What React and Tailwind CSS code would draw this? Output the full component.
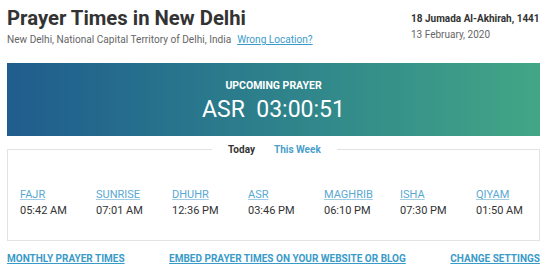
import React from 'react';

const prayers = [
  { name: 'FAJR', time: '05:42 AM' },
  { name: 'SUNRISE', time: '07:01 AM' },
  { name: 'DHUHR', time: '12:36 PM' },
  { name: 'ASR', time: '03:46 PM' },
  { name: 'MAGHRIB', time: '06:10 PM' },
  { name: 'ISHA', time: '07:30 PM' },
  { name: 'QIYAM', time: '01:50 AM' },
];

const App = () => {
  return (
    <div className="w-[550px] h-[271px] bg-white overflow-hidden px-[7px] pr-[10px] font-['Roboto',sans-serif]">
      <div className="flex justify-between pt-[4px]">
        <div>
          <h1 className="text-[20.3px] leading-[28px] font-bold text-[#333]">Prayer Times in New Delhi</h1>
          <div className="text-[10.1px] leading-[14px] text-[#666] mt-[1px]">
            New Delhi, National Capital Territory of Delhi, India
            <a href="#" className="ml-[6px] text-[#3a9bc9] underline">Wrong Location?</a>
          </div>
        </div>
        <div className="w-[129px] pt-[7px] text-[10px] leading-[16px]">
          <div className="font-bold text-[#333]">18 Jumada Al-Akhirah, 1441</div>
          <div className="text-[#666]">13 February, 2020</div>
        </div>
      </div>

      <div className="mt-[16px] h-[73px] bg-gradient-to-r from-[#205c8d] to-[#42a685] flex flex-col items-center justify-center text-white">
        <div className="text-[10.5px] font-bold leading-[14px] mt-[4px]">UPCOMING PRAYER</div>
        <div className="text-[23px] leading-[28px] mt-[3px]">ASR&nbsp;&nbsp;03:00:51</div>
      </div>

      <div className="mt-[13px] h-[92px] border border-[#e3e3e3] relative">
        <div className="absolute -top-[7px] left-[204px] bg-white px-[16px] flex gap-[19px] text-[10px] font-bold leading-[14px]">
          <span className="text-[#333]">Today</span>
          <span className="text-[#4a9fcb]">This Week</span>
        </div>
        <div className="flex pl-[12px] pt-[37px]">
          {prayers.map(p => (
            <div key={p.name} className="w-[76px] shrink-0 text-[11px] leading-[16px]">
              <a href="#" className="text-[#5aa8d2] underline decoration-[#9fcbe3]">{p.name}</a>
              <div className="text-[#333]">{p.time}</div>
            </div>
          ))}
        </div>
      </div>

      <div className="mt-[11px] flex justify-between text-[10px] font-bold leading-[14px]">
        <a href="#" className="text-[#3a9bc9] underline">MONTHLY PRAYER TIMES</a>
        <a href="#" className="text-[#3a9bc9] underline">EMBED PRAYER TIMES ON YOUR WEBSITE OR BLOG</a>
        <a href="#" className="text-[#3a9bc9] underline">CHANGE SETTINGS</a>
      </div>
    </div>
  );
};

export default App;
